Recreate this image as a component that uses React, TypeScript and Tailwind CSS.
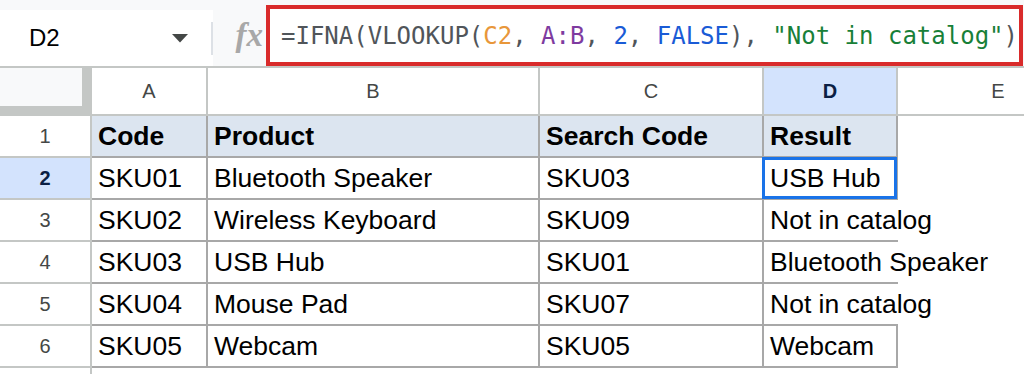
const rows: string[][] = [
  ["Code", "Product", "Search Code", "Result"],
  ["SKU01", "Bluetooth Speaker", "SKU03", "USB Hub"],
  ["SKU02", "Wireless Keyboard", "SKU09", "Not in catalog"],
  ["SKU03", "USB Hub", "SKU01", "Bluetooth Speaker"],
  ["SKU04", "Mouse Pad", "SKU07", "Not in catalog"],
  ["SKU05", "Webcam", "SKU05", "Webcam"],
];

const letters = ["A", "B", "C", "D", "E"];

function Formula() {
  return (
    <span className="whitespace-nowrap font-['DejaVu_Sans_Mono',monospace] text-[24px] leading-none text-[#50555a]">
      =IFNA(VLOOKUP(<span className="text-[#e8973a]">C2</span>,{" "}
      <span className="text-[#7e3ba0]">A:B</span>,{" "}
      <span className="text-[#1a5bd6]">2</span>,{" "}
      <span className="text-[#1a5bd6]">FALSE</span>),{" "}
      <span className="text-[#188038]">"Not in catalog"</span>)
    </span>
  );
}

export default function App() {
  return (
    <div className="h-[374px] w-[1024px] overflow-hidden bg-white font-['Liberation_Sans',Arial,sans-serif]">
      {/* Formula bar */}
      <div className="flex h-[66px] bg-[#f8f9fa]">
        <div className="mt-[10px] flex w-[211px] items-center bg-white pl-[29px] pr-[23px]">
          <span className="text-[24px] leading-none text-black">D2</span>
          <svg className="ml-auto" width="16" height="9" viewBox="0 0 16 9">
            <polygon points="0,0 16,0 8,8.5" fill="#444746" />
          </svg>
        </div>
        <div className="mt-[10px] flex w-[2px] items-center bg-white">
          <div className="h-[33px] w-[2px] bg-[#dde1e6]" />
        </div>
        <div className="mt-[10px] flex w-[53px] items-center justify-end pr-[3px]">
          <span className="-mt-[6px] font-['Liberation_Serif',serif] text-[33px] font-bold italic leading-none text-[#a8a8a8]">
            fx
          </span>
        </div>
        <div className="mt-[5px] flex h-[61px] w-[757px] items-center border-4 border-[#d92b2b] bg-white pl-[11px]">
          <Formula />
        </div>
      </div>

      {/* Grid */}
      <div className="grid grid-cols-[92px_116px_332px_224px_134px_1fr] grid-rows-[48px_repeat(6,42px)_6px] border-t-2 border-[#c4c7c5]">
        {/* column headers */}
        <div className="border-r-[10px] border-b-[10px] border-[#c4c7c5] bg-[#f8f9fa]" />
        {letters.map((l) => (
          <div
            key={l}
            className={
              "border-b-2 border-[#c4c7c5] text-[20px] leading-[46px] " +
              (l === "D"
                ? "border-r-2 bg-[#d3e3fd] text-center font-bold text-[#0b1f44]"
                : l === "E"
                  ? "text-[#444746]"
                  : "border-r-2 text-center text-[#444746]")
            }
          >
            {l === "E" ? <div className="w-[200px] text-center">E</div> : l}
          </div>
        ))}

        {rows.map((r, i) => (
          <div key={i} className="contents">
            <div
              className={
                "border-r-2 border-b-2 border-[#c4c7c5] text-center text-[20px] leading-[40px] " +
                (i === 1 ? "bg-[#d3e3fd] font-bold text-[#0b1f44]" : "text-[#444746]")
              }
            >
              {i + 1}
            </div>
            {r.map((c, j) => {
              const noRight = j === 3 && i >= 2 && i <= 4;
              return (
                <div
                  key={j}
                  className={
                    "relative whitespace-nowrap border-b-2 border-[#a8a8a8] pl-[6px] text-[26.5px] leading-[40px] text-black " +
                    (noRight ? "" : "border-r-2 ") +
                    (i === 0 ? "bg-[#dce5f0] font-bold" : "")
                  }
                >
                  {c}
                  {i === 1 && j === 3 && (
                    <div className="absolute -top-[1px] -left-[2px] h-[42px] w-[135px] border-[3px] border-[#1a73e8]" />
                  )}
                </div>
              );
            })}
            <div />
          </div>
        ))}

        {/* partial row */}
        <div className="border-r-2 border-[#c4c7c5]" />
        <div />
        <div />
        <div />
        <div />
        <div />
      </div>
    </div>
  );
}
